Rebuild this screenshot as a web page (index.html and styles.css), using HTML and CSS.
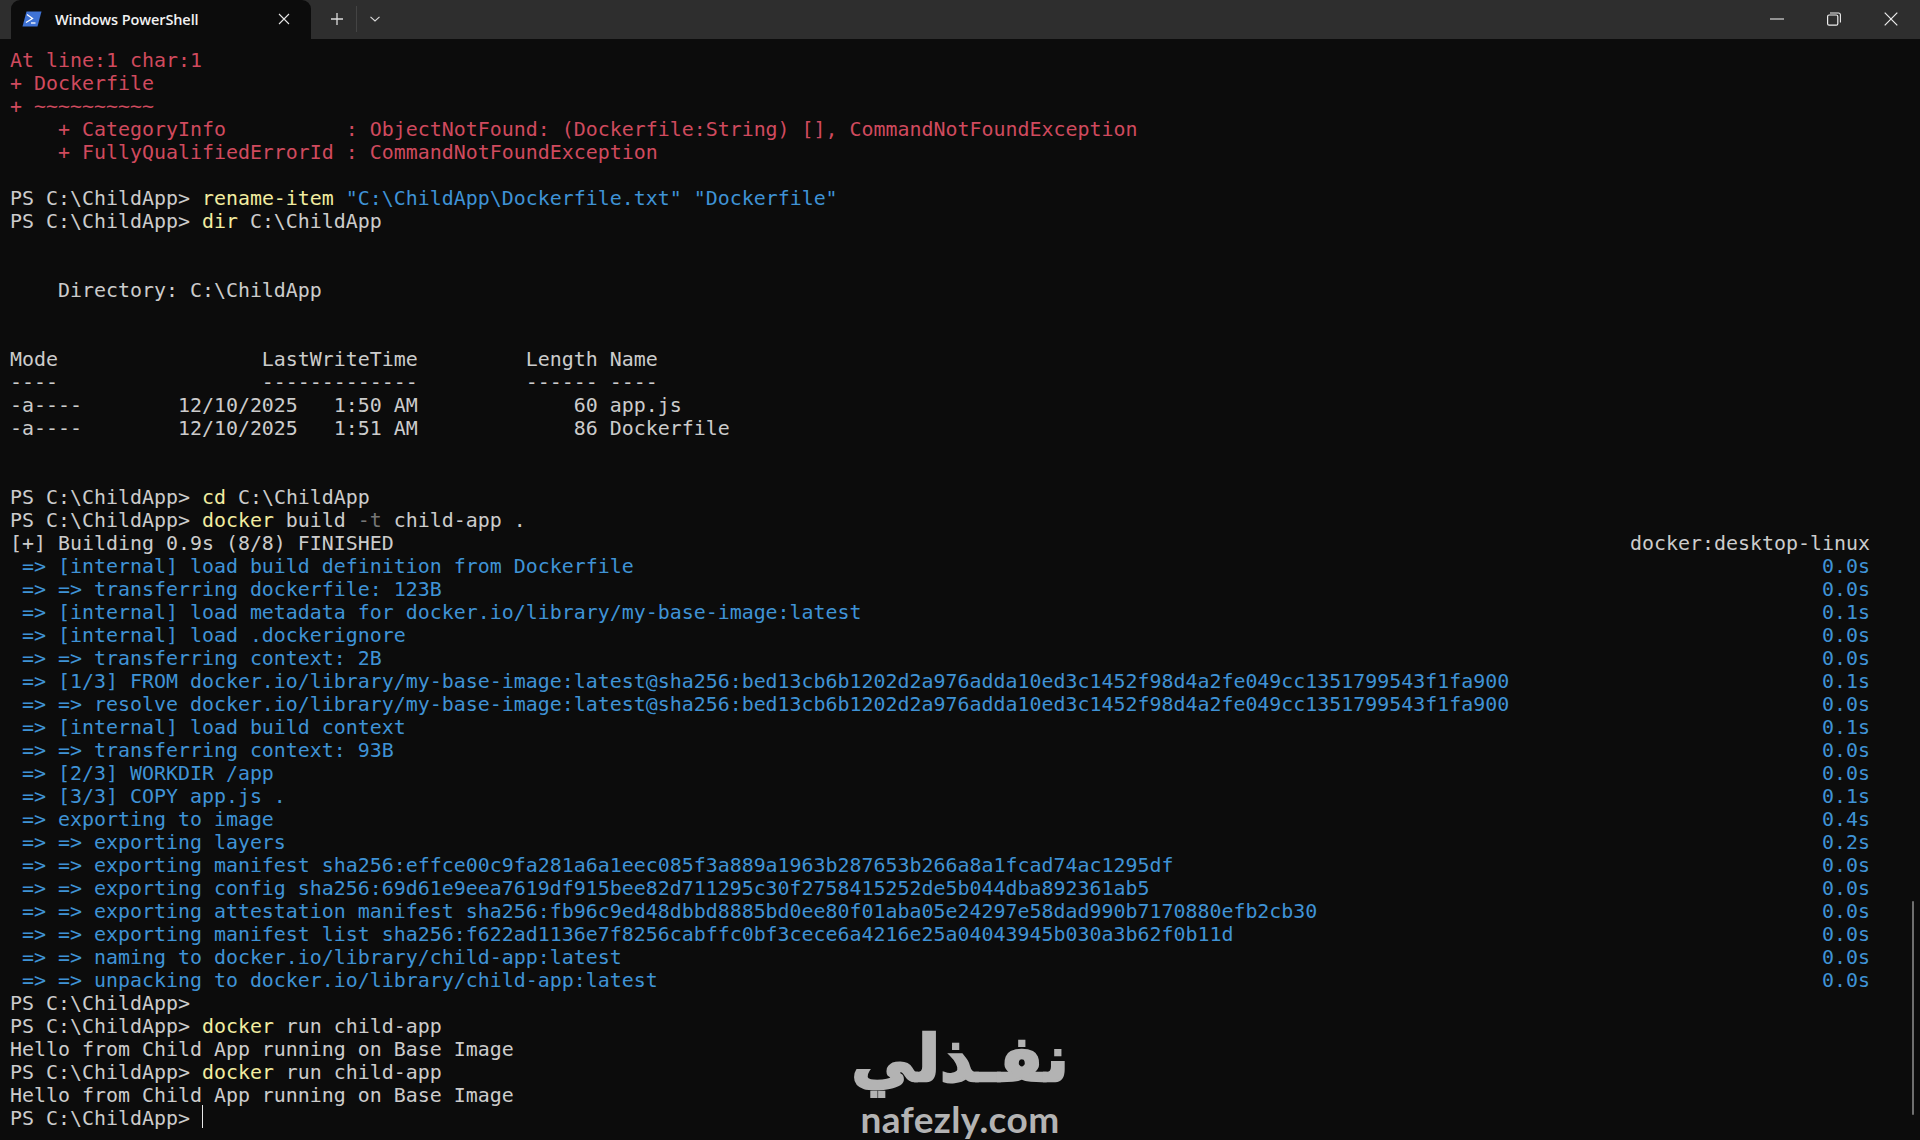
FILE: index.html
```html
<!DOCTYPE html>
<html lang="en">
<head>
<meta charset="utf-8">
<title>Windows PowerShell</title>
<link rel="stylesheet" href="styles.css">
</head>
<body>
<div class="window">
  <header class="titlebar">
    <div class="tab">
      <svg class="tab-icon" viewBox="0 0 20 16" width="20" height="16"><path d="M4.5 0.5H19.5L15.5 15.5H0.5Z" fill="#3f73d6"/><path d="M5 3.5L10.5 7.5L4 11.5" fill="none" stroke="#fff" stroke-width="1.3"/><path d="M9 12H13.5" stroke="#fff" stroke-width="1.3"/></svg>
      <span class="tab-title">Windows PowerShell</span>
      <svg class="tab-close" viewBox="0 0 12 12" width="12" height="12"><path d="M1 1L11 11M11 1L1 11" stroke="#e6e6e6" stroke-width="1.1"/></svg>
    </div>
    <div class="tab-actions">
      <svg viewBox="0 0 12 12" width="12" height="12"><path d="M6 0V12M0 6H12" stroke="#dcdcdc" stroke-width="1.3"/></svg>
      <span class="divider"></span>
      <svg viewBox="0 0 10 6" width="10" height="6"><path d="M0.5 0.8L5 5L9.5 0.8" fill="none" stroke="#dcdcdc" stroke-width="1.1"/></svg>
    </div>
    <div class="window-controls">
      <svg viewBox="0 0 14 2" width="14" height="2"><path d="M0 1H14" stroke="#d8d8d8" stroke-width="1.2"/></svg>
      <svg viewBox="0 0 14 14" width="14" height="14"><rect x="0.6" y="3" width="10.2" height="10.2" rx="1.5" fill="none" stroke="#eee" stroke-width="1.2"/><path d="M3 1H11.5Q13.4 1 13.4 3V10.5" fill="none" stroke="#eee" stroke-width="1.1"/></svg>
      <svg viewBox="0 0 14 14" width="14" height="14"><path d="M0.7 0.7L13.3 13.3M13.3 0.7L0.7 13.3" stroke="#eee" stroke-width="1.2"/></svg>
    </div>
  </header>
  <main class="terminal">
    <div class="row err">At line:1 char:1</div>
    <div class="row err">+ Dockerfile</div>
    <div class="row err">+ ~~~~~~~~~~</div>
    <div class="row err">    + CategoryInfo          : ObjectNotFound: (Dockerfile:String) [], CommandNotFoundException</div>
    <div class="row err">    + FullyQualifiedErrorId : CommandNotFoundException</div>
    <div class="row"></div>
    <div class="row">PS C:\ChildApp&gt; <span class="cmd">rename-item</span> <span class="str">"C:\ChildApp\Dockerfile.txt"</span> <span class="str">"Dockerfile"</span></div>
    <div class="row">PS C:\ChildApp&gt; <span class="cmd">dir</span> C:\ChildApp</div>
    <div class="row"></div>
    <div class="row"></div>
    <div class="row">    Directory: C:\ChildApp</div>
    <div class="row"></div>
    <div class="row"></div>
    <div class="row">Mode                 LastWriteTime         Length Name</div>
    <div class="row">----                 -------------         ------ ----</div>
    <div class="row">-a----        12/10/2025   1:50 AM             60 app.js</div>
    <div class="row">-a----        12/10/2025   1:51 AM             86 Dockerfile</div>
    <div class="row"></div>
    <div class="row"></div>
    <div class="row">PS C:\ChildApp&gt; <span class="cmd">cd</span> C:\ChildApp</div>
    <div class="row">PS C:\ChildApp&gt; <span class="cmd">docker</span> build <span class="dim">-t</span> child-app .</div>
    <div class="row split"><span>[+] Building 0.9s (8/8) FINISHED</span><span>docker:desktop-linux</span></div>
    <div class="row split build"><span> =&gt; [internal] load build definition from Dockerfile</span><span>0.0s</span></div>
    <div class="row split build"><span> =&gt; =&gt; transferring dockerfile: 123B</span><span>0.0s</span></div>
    <div class="row split build"><span> =&gt; [internal] load metadata for docker.io/library/my-base-image:latest</span><span>0.1s</span></div>
    <div class="row split build"><span> =&gt; [internal] load .dockerignore</span><span>0.0s</span></div>
    <div class="row split build"><span> =&gt; =&gt; transferring context: 2B</span><span>0.0s</span></div>
    <div class="row split build"><span> =&gt; [1/3] FROM docker.io/library/my-base-image:latest@sha256:bed13cb6b1202d2a976adda10ed3c1452f98d4a2fe049cc1351799543f1fa900</span><span>0.1s</span></div>
    <div class="row split build"><span> =&gt; =&gt; resolve docker.io/library/my-base-image:latest@sha256:bed13cb6b1202d2a976adda10ed3c1452f98d4a2fe049cc1351799543f1fa900</span><span>0.0s</span></div>
    <div class="row split build"><span> =&gt; [internal] load build context</span><span>0.1s</span></div>
    <div class="row split build"><span> =&gt; =&gt; transferring context: 93B</span><span>0.0s</span></div>
    <div class="row split build"><span> =&gt; [2/3] WORKDIR /app</span><span>0.0s</span></div>
    <div class="row split build"><span> =&gt; [3/3] COPY app.js .</span><span>0.1s</span></div>
    <div class="row split build"><span> =&gt; exporting to image</span><span>0.4s</span></div>
    <div class="row split build"><span> =&gt; =&gt; exporting layers</span><span>0.2s</span></div>
    <div class="row split build"><span> =&gt; =&gt; exporting manifest sha256:effce00c9fa281a6a1eec085f3a889a1963b287653b266a8a1fcad74ac1295df</span><span>0.0s</span></div>
    <div class="row split build"><span> =&gt; =&gt; exporting config sha256:69d61e9eea7619df915bee82d711295c30f2758415252de5b044dba892361ab5</span><span>0.0s</span></div>
    <div class="row split build"><span> =&gt; =&gt; exporting attestation manifest sha256:fb96c9ed48dbbd8885bd0ee80f01aba05e24297e58dad990b7170880efb2cb30</span><span>0.0s</span></div>
    <div class="row split build"><span> =&gt; =&gt; exporting manifest list sha256:f622ad1136e7f8256cabffc0bf3cece6a4216e25a04043945b030a3b62f0b11d</span><span>0.0s</span></div>
    <div class="row split build"><span> =&gt; =&gt; naming to docker.io/library/child-app:latest</span><span>0.0s</span></div>
    <div class="row split build"><span> =&gt; =&gt; unpacking to docker.io/library/child-app:latest</span><span>0.0s</span></div>
    <div class="row">PS C:\ChildApp&gt;</div>
    <div class="row">PS C:\ChildApp&gt; <span class="cmd">docker</span> run child-app</div>
    <div class="row">Hello from Child App running on Base Image</div>
    <div class="row">PS C:\ChildApp&gt; <span class="cmd">docker</span> run child-app</div>
    <div class="row">Hello from Child App running on Base Image</div>
    <div class="row">PS C:\ChildApp&gt; <span class="cursor"></span></div>
    <div class="scrollbar"></div>
    <div class="watermark">
      <div class="wm-ar" dir="rtl" lang="ar">نفـذلي</div>
      <div class="wm-en">nafezly.com</div>
    </div>
  </main>
</div>
</body>
</html>
```
FILE: styles.css
```css
* { box-sizing: border-box; }
html, body { margin: 0; padding: 0; background: #0c0c0c; }
.window { width: 1920px; height: 1140px; display: flex; flex-direction: column; overflow: hidden; }

.titlebar { height: 39px; flex: none; display: flex; align-items: center; background: #2e2e2e; padding-left: 11px; padding-bottom: 1px; }
.tab { width: 300px; height: 39px; margin-bottom: -1px; background: #0c0c0c; border-radius: 9px 9px 0 0; display: flex; align-items: center; padding: 0 0 1px 11px; color: #f2f2f2; font: 600 14.5px "Open Sans", "Noto Sans", sans-serif; }
.tab-icon { flex: none; }
.tab-title { margin-left: 13px; flex: 1; letter-spacing: -0.1px; }
.tab-close { flex: none; margin-right: 21px; }
.tab-actions { display: flex; align-items: center; margin-left: 20px; }
.divider { width: 1px; height: 26px; background: #444; margin: 0 13px; }
.window-controls { margin-left: auto; display: flex; align-items: center; gap: 43px; padding-right: 22px; }

.terminal { position: relative; flex: 1; padding: 10px 50px 0 10px; font-family: "DejaVu Sans Mono", "Liberation Mono", monospace; font-size: 19.93px; color: #cccccc; }
.row { height: 23px; line-height: 23px; white-space: pre; }
.split { display: flex; justify-content: space-between; }
.err { color: #d04a5e; }
.build { color: #3f93d6; }
.cmd { color: #f2eda0; }
.str { color: #3f93d6; }
.dim { color: #767676; }
.cursor { display: inline-block; width: 1px; height: 23px; background: #e8e8e8; vertical-align: top; margin-top: -2px; }

.scrollbar { position: absolute; right: 6px; top: 862px; width: 2px; height: 214px; background: #6f6f6f; border-radius: 1px; }

.watermark { position: absolute; left: 840px; top: 985px; width: 240px; text-align: center; color: #b3b3b3; }
.wm-ar { font: 700 64px/70px "DejaVu Sans", sans-serif; height: 70px; -webkit-text-stroke: 2.5px #b3b3b3; }
.wm-en { font: 700 37px/37px Lato, sans-serif; margin-top: 6px; letter-spacing: 0.4px; }
```
